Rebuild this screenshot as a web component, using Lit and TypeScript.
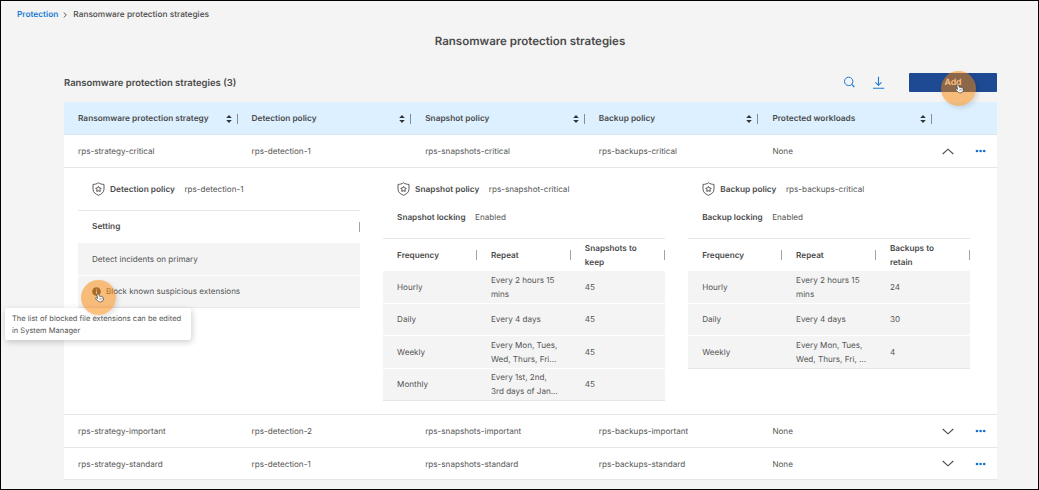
import { LitElement, html, css, svg, nothing } from "lit";
import { customElement, property } from "lit/decorators.js";

interface Strategy {
  name: string;
  detection: string;
  snapshot: string;
  backup: string;
  workloads: string;
  open?: boolean;
}

interface Schedule {
  frequency: string;
  repeat: string[];
  keep: string;
}

const COLUMNS = ["Ransomware protection strategy", "Detection policy", "Snapshot policy", "Backup policy", "Protected workloads"];

const STRATEGIES: Strategy[] = [
  { name: "rps-strategy-critical", detection: "rps-detection-1", snapshot: "rps-snapshots-critical", backup: "rps-backups-critical", workloads: "None", open: true },
  { name: "rps-strategy-important", detection: "rps-detection-2", snapshot: "rps-snapshots-important", backup: "rps-backups-important", workloads: "None" },
  { name: "rps-strategy-standard", detection: "rps-detection-1", snapshot: "rps-snapshots-standard", backup: "rps-backups-standard", workloads: "None" },
];

const SNAPSHOTS: Schedule[] = [
  { frequency: "Hourly", repeat: ["Every 2 hours 15", "mins"], keep: "45" },
  { frequency: "Daily", repeat: ["Every 4 days"], keep: "45" },
  { frequency: "Weekly", repeat: ["Every Mon, Tues,", "Wed, Thurs, Fri..."], keep: "45" },
  { frequency: "Monthly", repeat: ["Every 1st, 2nd,", "3rd days of Jan..."], keep: "45" },
];

const BACKUPS: Schedule[] = [
  { frequency: "Hourly", repeat: ["Every 2 hours 15", "mins"], keep: "24" },
  { frequency: "Daily", repeat: ["Every 4 days"], keep: "30" },
  { frequency: "Weekly", repeat: ["Every Mon, Tues,", "Wed, Thurs, Fri, ..."], keep: "4" },
];

const lines = (parts: string[]) => parts.map((p) => html`<div>${p}</div>`);

const handIcon = svg`
  <path d="M3.2 1.2c.8-.5 1.5 0 1.8.7l1.2 2.5c.5-.4 1.1-.3 1.5.1.5-.3 1.1-.2 1.5.3.7-.2 1.3.1 1.5.8l.5 2.200c.1 1.100-.3 1.700-.7 2.400L7.200 11.800c-1.700-.2-3.200-1.200-4.600-2.600L.8 7.600c-.5-.7.1-1.500 1-1.300l1.700.7L2.500 2.600c-.1-.6.200-1.100.7-1.400z"
    fill="#fff" stroke="#444" stroke-width="1" stroke-linejoin="round"/>
  <path d="M5.800 7l.8 2M7.300 6.600l.8 2M8.700 6.200l.7 1.800" stroke="#444" stroke-width=".6" fill="none"/>`;

@customElement("policy-head")
class PolicyHead extends LitElement {
  @property() label = "";
  @property() value = "";
  static styles = css`
    :host { display: flex; align-items: center; height: 18px; white-space: nowrap; }
    .shield { width: 13px; height: 14px; flex: none; margin-right: 5px; }
    .label { font-size: 8.300px; font-weight: 600; color: #4a4a4a; margin-right: 9.500px; padding-top: 2px; }
  `;
  render() {
    return html`
      <svg class="shield" viewBox="0 0 13 14" fill="none" stroke="#4a4a4a" stroke-linejoin="round">
        <path d="M6.500 .8C5 1.900 3 2.400 1 2.400V7.200c0 3 2.400 4.900 5.500 6.100 3.100-1.200 5.500-3.100 5.500-6.100V2.400C10 2.400 8 1.900 6.500.8z" stroke-width=".9"/>
        <path d="M6.500 4.400l.9 1.500 1.800.4-1.200 1.300.2 1.800-1.700-.7-1.700.7.2-1.800-1.200-1.300 1.800-.4z" stroke-width="1"/>
      </svg>
      <span class="label">${this.label}</span><span>${this.value}</span>`;
  }
}

@customElement("schedule-table")
class ScheduleTable extends LitElement {
  @property({ attribute: false }) rows: Schedule[] = [];
  @property({ attribute: false }) keepLabel: string[] = [];
  static styles = css`
    :host { display: block; border-top: 1px solid #e6e6e6; }
    .row { display: grid; grid-template-columns: repeat(3, 1fr); height: 31.500px; background: #f4f4f4; margin-bottom: 1px; line-height: 14px; }
    .row.head { background: #fff; height: 32px; margin: 0; font-size: 8.200px; font-weight: 600; color: #4a4a4a; }
    .row:last-child { border-bottom: 1px solid #e6e6e6; margin: 0; }
    .cell { display: flex; flex-direction: column; justify-content: center; padding-left: 14px; position: relative; white-space: nowrap; }
    .head .cell { padding-bottom: 1px; }
    .head .cell::after { content: ""; position: absolute; right: 0; top: 11px; width: 1px; height: 10px; background: #a3a3a3; }
  `;
  render() {
    return html`
      <div class="row head">
        <div class="cell">Frequency</div><div class="cell">Repeat</div><div class="cell">${lines(this.keepLabel)}</div>
      </div>
      ${this.rows.map((r) => html`
        <div class="row"><div class="cell">${r.frequency}</div><div class="cell">${lines(r.repeat)}</div><div class="cell">${r.keep}</div></div>`)}`;
  }
}

@customElement("app-root")
class AppRoot extends LitElement {
  static styles = css`
    :host { display: block; box-sizing: border-box; width: 1039px; height: 490px; overflow: hidden; position: relative;
      border: 1px solid #000; background: #f4f4f4; color: #555;
      font: 8.120px/14px Inter, sans-serif; text-rendering: geometricPrecision; }
    .crumbs { display: flex; align-items: center; height: 14px; padding: 7px 0 0 16px; font-size: 8.300px; font-weight: 500; color: #4a4a4a; }
    .crumbs a { color: #1a7bd3; font-weight: 600; }
    .crumbs svg { width: 4px; height: 6px; margin: 0 6px 0 5px; }
    h1 { margin: 9px 0 0; height: 20px; padding-left: 21px; line-height: 20px; font-size: 11.500px; font-weight: 600; text-align: center; color: #4a4a4a; }
    .main { margin: 21px 41px 0 63px; }
    .bar { display: flex; align-items: center; height: 20px; margin-bottom: 10px; }
    h2 { margin: 0; padding-top: 3px; flex: 1; font-size: 9.480px; font-weight: 600; line-height: 20px; color: #4a4a4a; }
    .search { width: 12px; height: 12px; margin-right: 17px; }
    .download { width: 13px; height: 13px; margin-right: 24px; }
    .add { width: 88px; height: 19px; border-radius: 1px; background: #1e4a93; color: #fff; text-align: center; line-height: 20px; font-size: 8.700px; font-weight: 600; }
    .grid { display: grid; grid-template-columns: repeat(5, 173.600px) 1fr; align-items: center; background: #fff; height: 32px; border-bottom: 1px solid #e6e6e6; white-space: nowrap; }
    .grid > div { padding: 0 0 0 14px; }
    .grid.head { background: #ddf0ff; border-color: #dde6ec; font-size: 8.300px; font-weight: 600; color: #4a4a4a; }
    .grid.head > div { display: flex; align-items: center; justify-content: space-between; padding-top: 2px; }
    .grid.last { height: 31px; }
    .sorter { display: flex; align-items: center; gap: 5px; margin-top: -1px; }
    .sorter svg { width: 6px; height: 8px; }
    .sorter i { width: 1px; height: 10px; background: #858b90; }
    .actions { display: flex; align-items: center; }
    .grid > .actions { padding: 0 0 0 10px; gap: 21.500px; }
    .chev { width: 12px; height: 7px; }
    .dots { width: 11px; height: 4px; }
    .detail { display: flex; align-items: flex-start; gap: 23.400px; height: 247px; padding: 0 14px; box-sizing: border-box; background: #fff; border-bottom: 1px solid #e6e6e6; }
    .panel { width: 281.700px; }
    policy-head { margin: 12px 0 0 14px; }
    .lock { margin: 12px 0 14px 14px; height: 14px; line-height: 14px; white-space: nowrap; }
    .lock b { font-size: 8.200px; font-weight: 600; color: #4a4a4a; margin-right: 9.500px; }
    .settings { margin-top: 12px; border-top: 1px solid #e6e6e6; }
    .line { display: flex; align-items: center; height: 31.500px; margin-bottom: 1px; padding-left: 14px; background: #f4f4f4; }
    .line.head { height: 32px; margin: 0; background: #fff; font-size: 8.300px; font-weight: 600; color: #4a4a4a; justify-content: space-between; }
    .line.head i { width: 1px; height: 10px; background: #a3a3a3; }
    .line:last-child { border-bottom: 1px solid #e9e9e9; font-size: 8.020px; }
    .info { width: 9px; height: 9px; margin-right: 5px; }
    .tip { position: absolute; left: 4px; top: 307px; width: 186px; height: 32px; box-sizing: border-box; padding: 5px 0 0 7px; background: #fff; border-radius: 2px; box-shadow: 1px 2px 6px rgba(0,0,0,.2); font-size: 7.500px; line-height: 12px; white-space: nowrap; }
    .click { position: absolute; width: 35px; height: 35px; border-radius: 50%; background: rgba(252,132,0,.5); box-shadow: 2px 2px 5px rgba(0,0,0,.12); }
    .click.on-info { left: 80px; top: 279px; }
    .click.on-add { left: 940px; top: 70px; }
    .hand { position: absolute; width: 9px; height: 10px; left: 14px; top: 12.500px; overflow: visible; }
  `;

  render() {
    return html`
      <div class="crumbs">
        <a>Protection</a>
        <svg viewBox="0 0 4 6"><path d="M.7.5L3.300 3 .7 5.500" fill="none" stroke="#4a4a4a" stroke-width=".9"/></svg>
        <span>Ransomware protection strategies</span>
      </div>
      <h1>Ransomware protection strategies</h1>
      <div class="main">
        <div class="bar">
          <h2>Ransomware protection strategies (3)</h2>
          <svg class="search" viewBox="0 0 12 12" fill="none" stroke="#1a7bd3"><circle cx="5.700" cy="5.400" r="4.200" stroke-width="1"/><path d="M8.800 8.500L11.400 11" stroke-width="1.100"/></svg>
          <svg class="download" viewBox="0 0 13 13" fill="none" stroke="#1a7bd3"><path d="M6.500 .8V9M3.500 6.300l3 3 3-3M1 12.200h11.200" stroke-width="1.100"/></svg>
          <div class="add">Add</div>
        </div>
        <div class="grid head">
          ${COLUMNS.map((c) => html`<div><span>${c}</span><span class="sorter">
            <svg viewBox="0 0 6 8" fill="#333"><path d="M3 0l2.800 3H.2zM3 8L.2 5h5.600z"/></svg><i></i></span></div>`)}
        </div>
        ${STRATEGIES.map((s, i) => html`
          <div class="grid ${i === STRATEGIES.length - 1 ? "last" : ""}">
            <div>${s.name}</div><div>${s.detection}</div><div>${s.snapshot}</div><div>${s.backup}</div><div>${s.workloads}</div>
            <div class="actions">
              <svg class="chev" viewBox="0 0 12 7" fill="none" stroke="#4a4a4a" stroke-width="1.100"><path d=${s.open ? "M.7 6L6 1.200 11.300 6" : "M.7 1L6 5.800 11.300 1"} /></svg>
              <svg class="dots" viewBox="0 0 11 4" fill="#1270cf"><circle cx="2" cy="2" r="1.300"/><circle cx="5.600" cy="2" r="1.300"/><circle cx="9.200" cy="2" r="1.300"/></svg>
            </div>
          </div>
          ${s.open ? this.renderDetail() : nothing}`)}
      </div>
      <div class="tip">The list of blocked file extensions can be edited<br />in System Manager</div>
      <div class="click on-info"><svg class="hand" viewBox="0 0 12 13">${handIcon}</svg></div>
      <div class="click on-add"><svg class="hand" viewBox="0 0 12 13">${handIcon}</svg></div>`;
  }

  renderDetail() {
    return html`
      <div class="detail">
        <div class="panel">
          <policy-head label="Detection policy" value="rps-detection-1"></policy-head>
          <div class="settings">
            <div class="line head"><span>Setting</span><i></i></div>
            <div class="line"><span>Detect incidents on primary</span></div>
            <div class="line">
              <svg class="info" viewBox="0 0 10 10"><circle cx="5" cy="5" r="4.800" fill="#555"/><path d="M5 4.300V7.600M5 2.300v1" stroke="#f4f4f4" stroke-width="1.100"/></svg>
              <span>Block known suspicious extensions</span>
            </div>
          </div>
        </div>
        <div class="panel">
          <policy-head label="Snapshot policy" value="rps-snapshot-critical"></policy-head>
          <div class="lock"><b>Snapshot locking</b>Enabled</div>
          <schedule-table .rows=${SNAPSHOTS} .keepLabel=${["Snapshots to", "keep"]}></schedule-table>
        </div>
        <div class="panel">
          <policy-head label="Backup policy" value="rps-backups-critical"></policy-head>
          <div class="lock"><b>Backup locking</b>Enabled</div>
          <schedule-table .rows=${BACKUPS} .keepLabel=${["Backups to", "retain"]}></schedule-table>
        </div>
      </div>`;
  }
}
